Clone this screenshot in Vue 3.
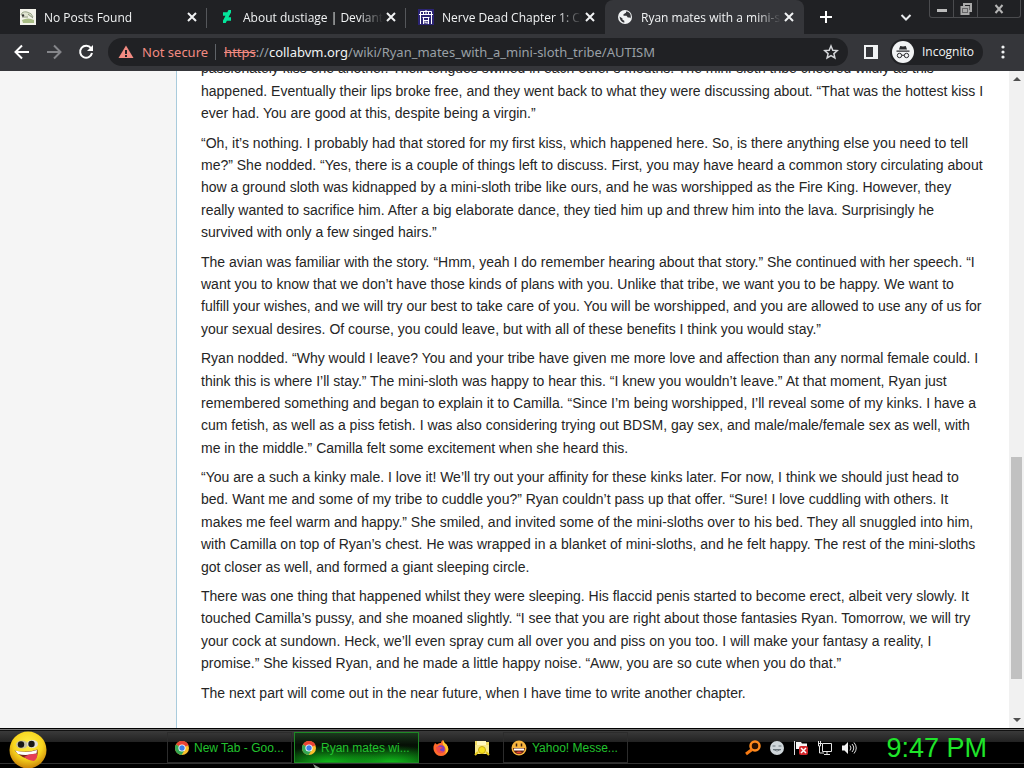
<script setup>
import { ref } from 'vue';

const activeTab = ref(3);

const tabs = [
    { title: 'No Posts Found', icon: 'sketch' },
    { title: 'About dustiage | DeviantArt', icon: 'deviant' },
    { title: 'Nerve Dead Chapter 1: Crash', icon: 'maze' },
    { title: 'Ryan mates with a mini-sloth tribe', icon: 'globe' }
];

const paragraphs = [
    'passionately kiss one another. Their tongues swirled in each other’s mouths. The mini-sloth tribe cheered wildly as this happened. Eventually their lips broke free, and they went back to what they were discussing about. “That was the hottest kiss I ever had. You are good at this, despite being a virgin.”',
    '“Oh, it’s nothing. I probably had that stored for my first kiss, which happened here. So, is there anything else you need to tell me?” She nodded. “Yes, there is a couple of things left to discuss. First, you may have heard a common story circulating about how a ground sloth was kidnapped by a mini-sloth tribe like ours, and he was worshipped as the Fire King. However, they really wanted to sacrifice him. After a big elaborate dance, they tied him up and threw him into the lava. Surprisingly he survived with only a few singed hairs.”',
    'The avian was familiar with the story. “Hmm, yeah I do remember hearing about that story.” She continued with her speech. “I want you to know that we don’t have those kinds of plans with you. Unlike that tribe, we want you to be happy. We want to fulfill your wishes, and we will try our best to take care of you. You will be worshipped, and you are allowed to use any of us for your sexual desires. Of course, you could leave, but with all of these benefits I think you would stay.”',
    'Ryan nodded. “Why would I leave? You and your tribe have given me more love and affection than any normal female could. I think this is where I’ll stay.” The mini-sloth was happy to hear this. “I knew you wouldn’t leave.” At that moment, Ryan just remembered something and began to explain it to Camilla. “Since I’m being worshipped, I’ll reveal some of my kinks. I have a cum fetish, as well as a piss fetish. I was also considering trying out BDSM, gay sex, and male/male/female sex as well, with me in the middle.” Camilla felt some excitement when she heard this.',
    '“You are a such a kinky male. I love it! We’ll try out your affinity for these kinks later. For now, I think we should just head to bed. Want me and some of my tribe to cuddle you?” Ryan couldn’t pass up that offer. “Sure! I love cuddling with others. It makes me feel warm and happy.” She smiled, and invited some of the mini-sloths over to his bed. They all snuggled into him, with Camilla on top of Ryan’s chest. He was wrapped in a blanket of mini-sloths, and he felt happy. The rest of the mini-sloths got closer as well, and formed a giant sleeping circle.',
    'There was one thing that happened whilst they were sleeping. His flaccid penis started to become erect, albeit very slowly. It touched Camilla’s pussy, and she moaned slightly. “I see that you are right about those fantasies Ryan. Tomorrow, we will try your cock at sundown. Heck, we’ll even spray cum all over you and piss on you too. I will make your fantasy a reality, I promise.” She kissed Ryan, and he made a little happy noise. “Aww, you are so cute when you do that.”',
    'The next part will come out in the near future, when I have time to write another chapter.'
];

const tasks = [
    { title: 'New Tab - Goo...', icon: 'chrome' },
    { title: 'Ryan mates wi...', icon: 'chrome', active: true },
    { title: 'Firefox', icon: 'firefox', pinned: true },
    { title: 'Explorer', icon: 'folder', pinned: true },
    { title: 'Yahoo! Messe...', icon: 'yahoo' }
];
</script>

<template>
<div class="screen">
    <header class="browser">
        <div class="tab-strip">
            <div v-for="(tab, i) in tabs" :key="tab.title" class="tab" :class="{ active: i === activeTab, last: i === activeTab - 1 }">
                <button class="tab-main" @click="activeTab = i">
                    <svg v-if="tab.icon === 'sketch'" width="16" height="16" viewBox="0 0 16 16">
                        <rect width="16" height="16" fill="#f3f3ea" />
                        <path d="M1 6Q2 2 7 3q5 1 6 5" fill="#dfe3d0" stroke="#9aa58a" />
                        <path d="M2 11q6-3 12 0v3H3z" fill="#a9bd85" />
                        <path d="M2 8h6M8 5l5 4" stroke="#8a9278" />
                        <circle cx="3" cy="6.500" r="1.200" fill="#333" />
                    </svg>
                    <svg v-else-if="tab.icon === 'deviant'" width="16" height="16" viewBox="0 0 16 16">
                        <path d="M12 3V1H9.500L8.300 3.200H4v3.600h2.500L4 11.500V14h2.700l1.200-2.200H12V8.200H9.500L12 3.500z" fill="#05e59b" />
                    </svg>
                    <svg v-else-if="tab.icon === 'maze'" width="16" height="16" viewBox="0 0 16 16">
                        <rect width="16" height="16" fill="#2b2473" />
                        <path d="M2.500 15V2.500h11V15M1 5.500h14M5.500 3v3M8 1v5M10.500 3v3M4.500 8.500h7M5.500 15V8.500M10.500 15V8.500M5.500 11.500h5M7 14.500v-2l2 2v-2" fill="none" stroke="#fff" />
                    </svg>
                    <svg v-else width="16" height="16" viewBox="0 0 16 16">
                        <circle cx="8" cy="8" r="7" fill="#f1f3f4" />
                        <path d="M2.500 7.500l3 2v1.300l1.800 1v2q-4.300-.8-4.800-6.300zM9 2.500v1.300L6.500 5.200v1.500h3l1.300 1.800h1.700l1 .8q1-3.500-1.200-5.500Q11 2.600 9 2.500z" fill="#35363a" />
                    </svg>
                    <span class="tab-title">{{ tab.title }}</span>
                </button>
                <button class="tab-close" aria-label="Close tab">
                    <svg width="16" height="16" viewBox="0 0 16 16"><path d="M4 4l8 8M12 4l-8 8" stroke="#f1f3f4" stroke-width="2" /></svg>
                </button>
            </div>
            <button class="new-tab" aria-label="New tab">
                <svg width="16" height="16" viewBox="0 0 16 16"><path d="M8 2v12M2 8h12" stroke="#fff" stroke-width="2" /></svg>
            </button>
            <button class="tab-search" aria-label="Search tabs">
                <svg width="16" height="16" viewBox="0 0 16 16"><path d="M3.500 6L8 10.500 12.500 6" fill="none" stroke="#e8eaed" stroke-width="2" /></svg>
            </button>
            <div class="caption">
                <button aria-label="Minimize"><svg width="14" height="14" viewBox="0 0 14 14"><path d="M2 8.500h10" stroke="#bbb" stroke-width="3" /></svg></button>
                <button aria-label="Restore"><svg width="14" height="14" viewBox="0 0 14 14"><path d="M5 4V2h7v7h-2M2.500 5h7v7h-7zM5 7.500h2v2H5z" fill="none" stroke="#aaa" stroke-width="2" /></svg></button>
                <button class="caption-close" aria-label="Close"><svg width="14" height="14" viewBox="0 0 14 14"><path d="M3.500 3l7 8M10.500 3l-7 8" stroke="#b5b5b5" stroke-width="2" /></svg></button>
            </div>
        </div>

        <div class="toolbar">
            <nav class="nav">
                <button aria-label="Back"><svg width="16" height="16" viewBox="0 0 16 16"><path d="M15 8H2M8 1.500L1.500 8 8 14.500" fill="none" stroke="#fff" stroke-width="2" /></svg></button>
                <button aria-label="Forward"><svg width="16" height="16" viewBox="0 0 16 16"><path d="M1 8h13M8 1.500L14.500 8 8 14.500" fill="none" stroke="#85868a" stroke-width="2" /></svg></button>
                <button aria-label="Reload"><svg width="16" height="16" viewBox="0 0 16 16"><path d="M13 4.200A6 6 0 1 0 14 9" fill="none" stroke="#fff" stroke-width="2" /><path d="M15 1v6H9z" fill="#fff" /></svg></button>
            </nav>
            <div class="omnibox">
                <svg width="16" height="16" viewBox="0 0 16 16"><path d="M8 1.500L15.500 14H.5z" fill="#f28b82" /><path d="M8 6v4M8 11v2" stroke="#202124" stroke-width="2" /></svg>
                <span class="not-secure">Not secure</span>
                <span class="url"><span class="scheme">https</span>://<b>collabvm.org</b>/wiki/Ryan_mates_with_a_mini-sloth_tribe/AUTISM</span>
                <button aria-label="Bookmark">
                    <svg width="16" height="16" viewBox="0 0 16 16"><path d="M8 2l1.800 4.200 4.500.4-3.400 3 1 4.400L8 11.700 4.100 14l1-4.400-3.400-3 4.500-.4z" fill="none" stroke="#d5d7da" stroke-width="1.500" /></svg>
                </button>
            </div>
            <button class="side-panel" aria-label="Side panel">
                <svg width="14" height="14" viewBox="0 0 14 14"><path d="M0 0h14v14H0zM2 2v10h7V2z" fill="#f1f3f4" fill-rule="evenodd" /></svg>
            </button>
            <button class="incognito">
                <svg width="22" height="22" viewBox="0 0 22 22">
                    <circle cx="11" cy="11" r="11" fill="#f1f3f4" />
                    <path d="M7 8.500L8.200 5l2.800.6 2.800-.6L15 8.500zM4.500 9.500h13v1.300h-13z" fill="#292a2d" />
                    <path d="M9.700 14.500q1.300-.8 2.600 0" fill="none" stroke="#292a2d" />
                    <circle cx="7.500" cy="14.500" r="2.200" fill="none" stroke="#292a2d" />
                    <circle cx="14.500" cy="14.500" r="2.200" fill="none" stroke="#292a2d" />
                </svg>
                Incognito
            </button>
            <button class="menu" aria-label="Menu">
                <svg width="16" height="16" viewBox="0 0 16 16"><g fill="#f1f3f4"><circle cx="8" cy="3" r="1.600" /><circle cx="8" cy="8" r="1.600" /><circle cx="8" cy="13" r="1.600" /></g></svg>
            </button>
        </div>
    </header>

    <div class="page">
        <aside class="sidebar"></aside>
        <main class="content">
            <article>
                <p v-for="(text, i) in paragraphs" :key="i">{{ text }}</p>
            </article>
        </main>
        <div class="scrollbar">
            <svg width="15" height="15" viewBox="0 0 15 15"><path d="M4 10l4-4 4 4z" fill="#505050" /></svg>
            <div class="track"><div class="thumb"></div></div>
            <svg width="15" height="15" viewBox="0 0 15 15"><path d="M4 5l4 4 4-4z" fill="#505050" /></svg>
        </div>
    </div>

    <footer class="taskbar">
        <button class="start" aria-label="Start">
            <svg width="38" height="38" viewBox="0 0 38 38">
                <defs>
                    <radialGradient id="face" cx=".5" cy=".35" r=".65">
                        <stop offset="0" stop-color="#fff04a" />
                        <stop offset=".6" stop-color="#f8d51d" />
                        <stop offset="1" stop-color="#c98208" />
                    </radialGradient>
                </defs>
                <circle cx="19" cy="19" r="18.500" fill="url(#face)" />
                <ellipse cx="13" cy="13.500" rx="6" ry="4" fill="#c9c3a0" />
                <ellipse cx="23.500" cy="13" rx="5.500" ry="4" fill="#e2e0d8" />
                <circle cx="12" cy="13.500" r="3.200" fill="#181818" />
                <circle cx="22.500" cy="13" r="3.200" fill="#181818" />
                <path d="M5.500 19.500q12 3 23-1 1 8-3.500 10-12 0-19.500-9z" fill="#75271a" />
                <path d="M6 19.500q11 3 22-.5l-.5 3.500Q17 25 9 23z" fill="#fff" />
                <path d="M15 26q6-4 13-3 1 4-3 7-6-.5-10-4z" fill="#e53f55" />
            </svg>
        </button>
        <div class="tasks">
            <button v-for="task in tasks" :key="task.title" class="task" :class="{ active: task.active, pinned: task.pinned }" :aria-label="task.title">
                <svg v-if="task.icon === 'chrome'" width="14" height="14" viewBox="0 0 14 14">
                    <circle cx="7" cy="7" r="7" fill="#fbc02d" />
                    <path d="M7 7L1 3.400A7 7 0 0 1 13.500 4.300z" fill="#e94335" />
                    <path d="M7 7L1 3.400A7 7 0 0 0 6.500 14L10 8.500z" fill="#34a853" />
                    <circle cx="7" cy="7" r="3.600" fill="#fff" />
                    <circle cx="7" cy="7" r="2.700" fill="#3f7ee8" />
                </svg>
                <svg v-else-if="task.icon === 'firefox'" width="16" height="16" viewBox="0 0 16 16">
                    <path d="M2 3l2 1.500Q6 2.500 8 3q0-2 2-3 1 3 3.500 4.500Q16 8 15 11q-2 5-7 5T1 11Q-.5 7 2 3z" fill="#ff6a2b" />
                    <path d="M10 0q1 3 3.500 4.500Q16 8 15 11q-1 2-3 3 2-5-1-8Q9 4 10 0z" fill="#ffc62e" />
                    <circle cx="8" cy="9" r="3.800" fill="#7b3fc0" />
                    <path d="M3 7q3-1 5 0l2 1q-3 0-3 2 1 2 4 1-2 3-5 2-3-2-3-6z" fill="#f04a4a" />
                </svg>
                <svg v-else-if="task.icon === 'folder'" width="16" height="16" viewBox="0 0 16 16">
                    <path d="M1 1h5l1 1h8v12H1z" fill="#f2dc62" />
                    <path d="M3 1h9v4H3z" fill="#fff7bd" />
                    <path d="M1 5h14v9H1z" fill="#f7e98d" />
                    <circle cx="8" cy="10" r="3.500" fill="#f5e11c" stroke="#c9a912" />
                    <path d="M1 15l3-3M15 15l-3-3" stroke="#e5c81b" stroke-width="2" />
                </svg>
                <svg v-else width="16" height="16" viewBox="0 0 16 16">
                    <circle cx="8" cy="8" r="7.500" fill="#f9b63e" />
                    <path d="M5.500 3.500v3M10.500 3.500v3" stroke="#3d2110" stroke-width="1.500" />
                    <path d="M2 8h12q-1 6-6 6T2 8z" fill="#5c1f10" />
                    <path d="M3 8.500h10v2H3z" fill="#fff" />
                    <path d="M5 12.500q3-2 6 0-3 2-6 0z" fill="#e54534" />
                </svg>
                <span v-if="!task.pinned">{{ task.title }}</span>
            </button>
        </div>
        <div class="tray">
            <svg width="16" height="16" viewBox="0 0 16 16"><circle cx="10" cy="6" r="4.500" fill="#2a1000" stroke="#ff8a1e" stroke-width="2.500" /><path d="M7 9.500L1 14" stroke="#f77a12" stroke-width="3" /></svg>
            <svg width="16" height="16" viewBox="0 0 16 16"><circle cx="8" cy="8" r="7" fill="#cfd6da" /><path d="M3.500 6h3M9.500 6h3M4 9.500q4 3 8 0z" fill="#fff" stroke="#69747b" /></svg>
            <svg width="16" height="16" viewBox="0 0 16 16"><path d="M1.500 1v14" stroke="#ddd" /><path d="M3 2h5l1 1.500h5V9H3z" fill="#f5f5f5" /><rect x="6" y="6" width="9" height="9" rx="2" fill="#d3262b" /><path d="M8 8l5 5M13 8l-5 5" stroke="#fff" stroke-width="1.500" /></svg>
            <svg width="16" height="16" viewBox="0 0 16 16"><path d="M5.500 3.500h9v8h-9zM7 14.500h6M10 12v2M1 3.500h4M1.500 1v5h2V1M2.500 6v7H7" fill="none" stroke="#e6e6e6" /></svg>
            <svg width="16" height="16" viewBox="0 0 16 16"><path d="M1 5.500h2.500L7 2v12L3.500 10.500H1z" fill="#f2f2f2" /><path d="M9 5.500q2 2.500 0 5M11 4q3.500 4 0 8M13 2.500q4.500 5.500 0 11" fill="none" stroke="#ddd" /></svg>
        </div>
        <time class="clock">9:47 PM</time>
        <svg class="pointer" width="8" height="4" viewBox="0 0 8 4"><path d="M0 0l7 4H2z" fill="#8d9a8d" /></svg>
    </footer>
</div>
</template>

<style>
body {
    margin: 0;
    overflow: hidden;
}
</style>

<style scoped>
.screen {
    display: flex;
    flex-direction: column;
    height: 100vh;
    font-family: "Liberation Sans", Arial, sans-serif;
}

button {
    display: flex;
    align-items: center;
    justify-content: center;
    flex: none;
    margin: 0;
    padding: 0;
    border: none;
    background: none;
    color: inherit;
    font: inherit;
    cursor: pointer;
}

svg {
    display: block;
    flex: none;
}

.browser {
    flex: none;
    font-family: "Segoe UI", "Open Sans", sans-serif;
    font-size: 12px;
    color: #f1f3f4;
}

.tab-strip {
    display: flex;
    align-items: center;
    height: 34px;
    padding: 0 3px 0 8px;
    background: #202124;
}

.tab {
    position: relative;
    display: flex;
    align-items: center;
    flex: 0 1 199px;
    min-width: 0;
    height: 34px;
    box-sizing: border-box;
    padding: 0 7px 0 12px;
}

.tab::after {
    content: "";
    position: absolute;
    right: 0;
    top: 8px;
    width: 1px;
    height: 20px;
    background: #55575b;
}

.tab.active {
    background: #35363a;
    border-radius: 8px 8px 0 0;
}

.tab.active::after, .tab.last::after {
    display: none;
}

.tab-main {
    flex: 1;
    min-width: 0;
    justify-content: flex-start;
    gap: 8px;
}

.tab-title {
    flex: 1;
    min-width: 0;
    overflow: hidden;
    white-space: nowrap;
    text-align: left;
    mask-image: linear-gradient(to right, #000 calc(100% - 24px), transparent);
}

.new-tab {
    margin-left: 14px;
}

.tab-search {
    margin-left: auto;
}

.caption {
    display: flex;
    align-self: flex-start;
    height: 18px;
    box-sizing: border-box;
    margin-left: 15px;
    border: 1px solid #4a4b4e;
    border-top: none;
    border-radius: 0 0 3px 3px;
}

.caption button {
    width: 24px;
    border-right: 1px solid #4a4b4e;
}

.caption .caption-close {
    width: 42px;
    border-right: none;
}

.toolbar {
    display: flex;
    align-items: center;
    height: 37px;
    box-sizing: border-box;
    padding: 0 14px 2px;
    background: #35363a;
}

.nav {
    display: flex;
    gap: 16px;
    margin-right: 14px;
}

.omnibox {
    display: flex;
    align-items: center;
    flex: 1;
    min-width: 0;
    height: 28px;
    box-sizing: border-box;
    padding: 0 9px 0 10px;
    border-radius: 14px;
    background: #202124;
    font-family: "Segoe UI", "Noto Sans", sans-serif;
    font-size: 13px;
    white-space: nowrap;
}

.not-secure {
    margin-left: 8px;
    padding-right: 7px;
    border-right: 1px solid #5f6368;
    line-height: 16px;
    color: #f28b82;
}

.url {
    flex: 1;
    min-width: 0;
    overflow: hidden;
    margin-left: 8px;
    color: #9aa0a6;
}

.url b {
    font-weight: 400;
    color: #f1f3f4;
}

.scheme {
    color: #f28b82;
    text-decoration: line-through;
}

.side-panel {
    margin-left: 16px;
}

.incognito {
    gap: 8px;
    height: 26px;
    margin-left: 12px;
    padding: 0 9px 0 2px;
    border-radius: 13px;
    background: #202124;
}

.menu {
    margin-left: 12px;
    margin-right: -1px;
}

.page {
    display: flex;
    flex: 1;
    min-height: 0;
    background: #fff;
}

.sidebar {
    flex: none;
    width: 176px;
    background: #f5f5f5;
}

.content {
    display: flex;
    flex-direction: column;
    justify-content: flex-end;
    flex: 1;
    min-width: 0;
    overflow: hidden;
    box-sizing: border-box;
    padding: 0 24px 24px;
    border-left: 1px solid #a9cbdc;
    font-size: 14px;
    line-height: 1.6;
    color: #252525;
}

p {
    margin: 7px 0 0;
}

.scrollbar {
    display: flex;
    flex-direction: column;
    flex: none;
    width: 15px;
    background: #f1f1f1;
}

.track {
    display: flex;
    flex-direction: column;
    flex: 1;
    padding: 0 2px;
}

.track::before {
    content: "";
    flex: 371;
}

.track::after {
    content: "";
    flex: 34;
}

.thumb {
    flex: 222;
    background: #c1c1c1;
}

.taskbar {
    position: relative;
    display: flex;
    align-items: center;
    flex: none;
    height: 40px;
    box-sizing: border-box;
    padding-bottom: 2px;
    border-top: 1px solid #000;
    background: linear-gradient(#777 0 1px, #111 1px 2px, #3a3a3a 2px, #222 13px, #000 13px 34px, #333 34px 35px, #000 35px);
    color: #22c32e;
}

.start {
    align-self: flex-start;
    width: 38px;
    margin: 2px 0 0 9px;
}

.tasks {
    display: flex;
    margin-left: 120px;
    gap: 2px;
}

.task {
    justify-content: flex-start;
    gap: 5px;
    width: 125px;
    height: 31px;
    box-sizing: border-box;
    padding-left: 7px;
    border: 1px solid #2c2c2c;
    font-size: 12px;
    white-space: nowrap;
}

.task.active {
    border-color: #1d8a24;
    background:
        radial-gradient(ellipse at 28% 105%, #12c51c, transparent 42%),
        radial-gradient(ellipse at 78% 105%, #12c51c, transparent 42%),
        linear-gradient(#1c3a1e, #061006 40%, #032b05);
}

.task.pinned {
    justify-content: center;
    width: 39px;
    padding: 0;
    border: none;
}

.tray {
    display: flex;
    gap: 8px;
    margin-left: auto;
}

.clock {
    margin: 0 37px 0 29px;
    font-size: 27px;
    line-height: 32px;
    color: #1fe52a;
}

.pointer {
    position: absolute;
    left: 313px;
    bottom: 0;
}
</style>
